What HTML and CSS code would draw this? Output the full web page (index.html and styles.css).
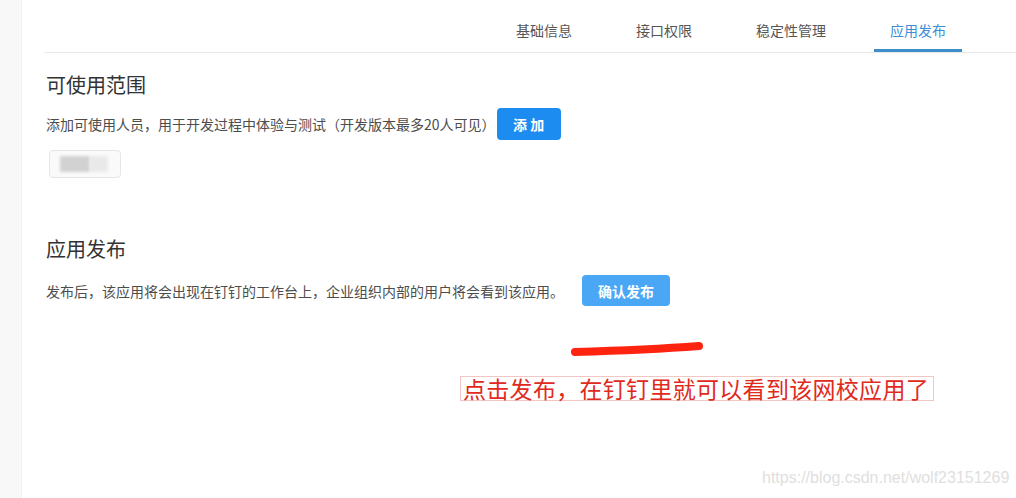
FILE: index.html
```html
<!DOCTYPE html>
<html lang="zh-CN">
<head>
    <meta charset="UTF-8">
    <title>应用发布</title>
    <link rel="stylesheet" href="styles.css">
</head>
<body>
    <div class="page">
        <div class="side"></div>

        <div class="main">
            <div class="tabs">
                <div class="tab">基础信息</div>
                <div class="tab">接口权限</div>
                <div class="tab">稳定性管理</div>
                <div class="tab active">应用发布</div>
            </div>

            <div class="section scope">
                <h2>可使用范围</h2>
                <div class="row">
                    <span class="desc">添加可使用人员，用于开发过程中体验与测试（开发版本最多20人可见）</span>
                    <button class="btn btn-add">添 加</button>
                </div>
                <div class="member">
                    <span class="blur dark"></span>
                    <span class="blur light"></span>
                </div>
            </div>

            <div class="section publish">
                <h2>应用发布</h2>
                <div class="row">
                    <span class="desc">发布后，该应用将会出现在钉钉的工作台上，企业组织内部的用户将会看到该应用。</span>
                    <button class="btn btn-publish">确认发布</button>
                </div>
            </div>
        </div>

        <!-- annotation drawn over the screenshot -->
        <svg class="stroke" width="140" height="16" viewBox="0 0 140 16">
            <path d="M5 11 C40 10 90 8 129 5" stroke="#ff2410" stroke-width="8" stroke-linecap="round" fill="none"/>
        </svg>
        <div class="note">点击发布，在钉钉里就可以看到该网校应用了</div>

        <div class="watermark">https://blog.csdn.net/wolf23151269</div>
    </div>
</body>
</html>
```

FILE: styles.css
```css
body { margin: 0; background: #fff; font-family: "Noto Sans CJK SC", "Liberation Sans", sans-serif; }
.page { position: relative; display: flex; width: 1016px; height: 498px; overflow: hidden; }
.side { width: 21px; background: #f8f8f8; border-right: 1px solid #f2f2f2; flex-shrink: 0; }
.main { flex: 1; padding-left: 22px; }

.tabs { display: flex; justify-content: flex-end; height: 52px; border-bottom: 1px solid #e8e8e8; padding-right: 54px; }
.tab { box-sizing: border-box; height: 52px; padding: 10px 16px 0; display: flex; align-items: center; font-size: 14px; color: #555; border-bottom: 3px solid transparent; }
.tab + .tab { margin-left: 32px; }
.tab.active { color: #3b8ed6; border-bottom-color: #3d8fc9; }

.section { padding-left: 2px; }
.section h2 { margin: 0; font-size: 20px; line-height: 28px; font-weight: normal; color: #333; }
.scope { margin-top: 18px; }
.scope .row { margin-top: 9px; }
.publish { margin-top: 57px; }
.publish .row { margin-top: 12px; }

.row { display: flex; align-items: center; }
.desc { font-size: 14px; color: #4d4d4d; white-space: nowrap; }

.btn { border: none; border-radius: 4px; color: #fff; font-family: inherit; font-size: 14px; font-weight: bold; cursor: pointer; }
.btn-add { margin-left: 1px; width: 64px; height: 32px; background: #1c8cf0; }
.btn-publish { margin-left: 18px; width: 88px; height: 31px; background: #4aa7f6; }

.member { display: flex; margin: 10px 0 0 3px; width: 72px; height: 28px; border: 1px solid #e6e6e6; border-radius: 4px; background: #fafafa; padding: 5px 0 0 10px; box-sizing: border-box; overflow: hidden; }
.blur { display: block; height: 16px; filter: blur(1.5px); }
.blur.dark { width: 30px; background: #d2d2d2; }
.blur.light { width: 18px; background: #e9e9e9; }

.stroke { position: absolute; left: 570px; top: 341px; }
.note { position: absolute; left: 460px; top: 376px; width: 470px; height: 23px; border: 1px solid #f1c7c4; padding-left: 2px; box-sizing: content-box; font-size: 23px; line-height: 23px; color: #e02a1c; letter-spacing: 0.3px; white-space: nowrap; }

.watermark { position: absolute; left: 762px; top: 469px; font-family: "Liberation Sans", Arial, sans-serif; font-size: 16px; color: #e0e0e0; }
```
